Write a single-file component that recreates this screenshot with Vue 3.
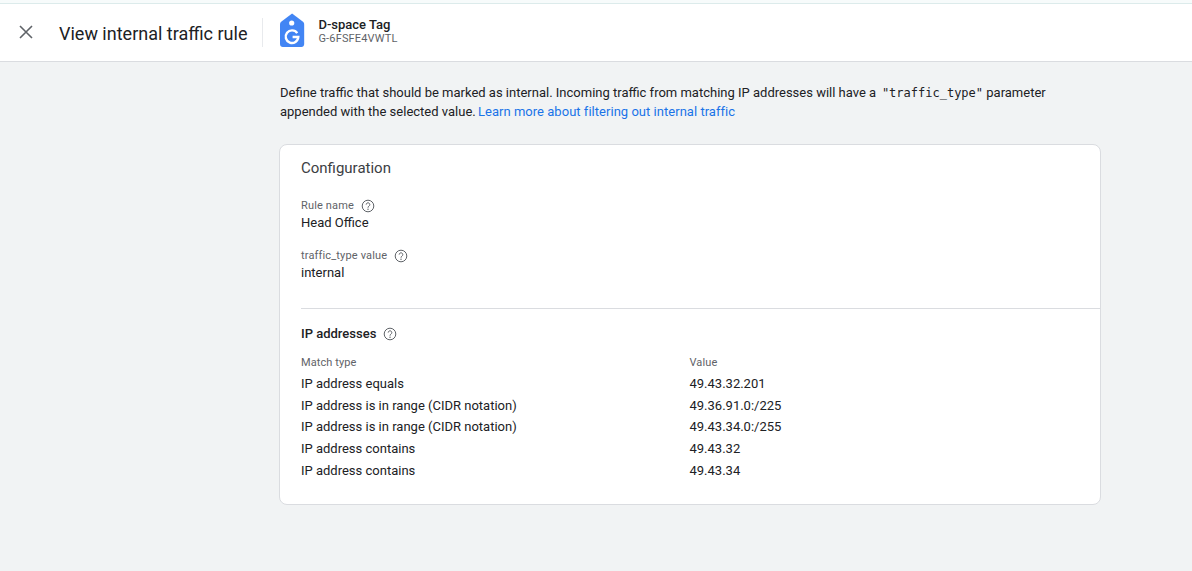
<script setup>
const rows = [
  ['IP address equals', '49.43.32.201'],
  ['IP address is in range (CIDR notation)', '49.36.91.0:/225'],
  ['IP address is in range (CIDR notation)', '49.43.34.0:/255'],
  ['IP address contains', '49.43.32'],
  ['IP address contains', '49.43.34'],
]
</script>

<template>
  <div class="page">
    <header class="head">
      <button class="close" aria-label="Close">
        <svg width="14" height="14" viewBox="0 0 14 14"><path d="M1 1l12 12M13 1L1 13" stroke="#5f6368" stroke-width="1.6" fill="none"/></svg>
      </button>
      <h1 class="title">View internal traffic rule</h1>
      <div class="sep"></div>
      <svg class="tag" width="26" height="34" viewBox="0 0 26 34">
        <path d="M13 0.5L24.4 8.5C25.4 9.3 26 10 26 11.5V31C26 32.7 24.7 34 23 34H3C1.3 34 0 32.7 0 31V11.5C0 10 .6 9.3 1.6 8.5Z" fill="#4285f4" transform="translate(1 0) scale(.93 1)"/>
        <circle cx="12.7" cy="10" r="2.6" fill="#fff"/>
        <path d="M18.2 20.1A6.3 6.3 0 1 0 19.3 24H13.6" fill="none" stroke="#fff" stroke-width="2.4"/>
      </svg>
      <div class="prop">
        <div class="prop-name">D-space Tag</div>
        <div class="prop-id">G-6FSFE4VWTL</div>
      </div>
    </header>

    <main class="main">
      <p class="intro">Define traffic that should be marked as internal. Incoming traffic from matching IP addresses will have a <code>"traffic_type"</code> parameter appended with the selected value. <a href="#" class="link">Learn more about filtering out internal traffic</a></p>

      <section class="card">
        <div class="config">
          <h2 class="card-title">Configuration</h2>
          <div class="label first">Rule name
            <svg class="help" viewBox="0 0 14 14"><circle cx="7" cy="7" r="5.8"/><path d="M5.2 5.6a1.8 1.8 0 1 1 2.8 1.5c-.7.5-1 .8-1 1.6"/><circle class="dot" cx="7" cy="10.3" r=".7"/></svg>
          </div>
          <div class="value">Head Office</div>
          <div class="label second">traffic_type value
            <svg class="help" viewBox="0 0 14 14"><circle cx="7" cy="7" r="5.8"/><path d="M5.2 5.6a1.8 1.8 0 1 1 2.8 1.5c-.7.5-1 .8-1 1.6"/><circle class="dot" cx="7" cy="10.3" r=".7"/></svg>
          </div>
          <div class="value">internal</div>
        </div>
        <div class="ips">
          <h3 class="ip-title">IP addresses
            <svg class="help" viewBox="0 0 14 14"><circle cx="7" cy="7" r="5.8"/><path d="M5.2 5.6a1.8 1.8 0 1 1 2.8 1.5c-.7.5-1 .8-1 1.6"/><circle class="dot" cx="7" cy="10.3" r=".7"/></svg>
          </h3>
          <div class="grid">
            <div class="th">Match type</div>
            <div class="th">Value</div>
            <template v-for="(r, i) in rows" :key="i">
              <div class="td">{{ r[0] }}</div>
              <div class="td">{{ r[1] }}</div>
            </template>
          </div>
        </div>
      </section>
    </main>
  </div>
</template>

<style>
html, body { margin: 0; background: #f1f3f4; }
</style>

<style scoped>
.page {
  height: 571px;
  overflow: hidden;
  background: #f1f3f4;
  font-family: Roboto, "Liberation Sans", sans-serif;
  color: #202124;
  font-size: 13px;
  box-sizing: border-box;
  padding-top: 3px;
  background-image: linear-gradient(#f7fbfb, #f7fbfb);
  background-size: 100% 3px;
  background-repeat: no-repeat;
}
.head {
  height: 59px;
  box-sizing: border-box;
  background: #fff;
  border-top: 1px solid #dcebeb;
  border-bottom: 1px solid #dadce0;
  display: flex;
  align-items: center;
  padding-left: 19px;
}
.close { width: 14px; height: 14px; padding: 0; border: 0; background: none; display: flex; margin-top: -1px; }
.title { font-size: 18px; font-weight: 400; margin: 2px 0 0 26px; line-height: 24px; }
.sep { width: 1px; height: 29px; background: #e8eaed; margin: 0 16px 0 15px; }
.tag { margin-right: 13px; margin-top: -5px; }
.prop { margin-top: -3px; }
.prop-name { font-size: 13px; font-weight: 500; line-height: 15px; }
.prop-id { font-size: 11px; color: #5f6368; line-height: 14px; letter-spacing: .17px; }
.main { padding: 22px 91px 0 279px; }
.intro { margin: 0 0 0 1px; line-height: 18.5px; width: 790px; }
code { font-family: "DejaVu Sans Mono", monospace; font-size: 12px; line-height: 1; margin: 0 0 0 2.5px; }
.link { color: #1a73e8; text-decoration: none; letter-spacing: .03px; margin-left: -1px; }
.card {
  margin-top: 23px;
  background: #fff;
  border: 1px solid #dadce0;
  border-radius: 8px;
  height: 361px;
  box-sizing: border-box;
  padding-left: 21px;
}
.config { height: 164px; border-bottom: 1px solid #dadce0; box-sizing: border-box; padding-top: 13px; }
.card-title { font-size: 15px; font-weight: 400; margin: 0; line-height: 20px; color: #3c4043; }
.label { font-size: 11px; color: #5f6368; line-height: 14px; display: flex; align-items: center; gap: 7px; letter-spacing: .15px; }
.label.first { margin-top: 21px; }
.label.second { margin-top: 17px; }
.value { line-height: 18px; margin-top: 1px; }
.help { width: 14px; height: 14px; fill: none; stroke: #5f6368; stroke-width: 1; }
.help .dot { fill: #5f6368; stroke: none; }
.ips { padding-top: 15px; }
.ip-title { font-size: 13px; font-weight: 500; margin: 0; line-height: 20px; display: flex; align-items: center; gap: 7px; }
.grid { display: grid; grid-template-columns: 388.5px 1fr; margin-top: 9px; }
.th { font-size: 11px; color: #5f6368; line-height: 20px; letter-spacing: .1px; }
.td { line-height: 21.7px; }
</style>
